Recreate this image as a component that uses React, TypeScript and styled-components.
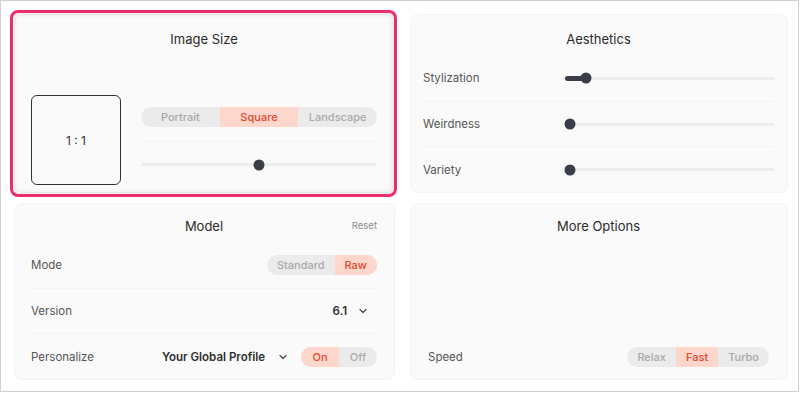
import React from 'react'
import styled, { createGlobalStyle } from 'styled-components'
import { ChevronDown } from 'lucide-react'

const GlobalStyle = createGlobalStyle`
  html, body {
    margin: 0;
    padding: 0;
    background: #ffffff;
  }
  body {
    font-family: Inter, "Noto Sans", "Liberation Sans", sans-serif;
    color: #333;
  }
`

const Frame = styled.div`
  box-sizing: border-box;
  width: 799px;
  height: 392px;
  border: 1px solid #d2d2d2;
  background: #ffffff;
  padding: 13px 10px 11px 13px;
  display: grid;
  grid-template-columns: 381px 378px;
  grid-template-rows: 179px 177px;
  column-gap: 15px;
  row-gap: 10px;
`

const Card = styled.section<{ $highlight?: boolean; $top?: number; $side?: number }>`
  position: relative;
  box-sizing: border-box;
  background: #fafafa;
  border: 1px solid #f4f4f4;
  border-radius: 8px;
  padding: ${({ $top = 15 }) => $top}px ${({ $side = 16 }) => $side + 1}px 0 ${({ $side = 16 }) => $side}px;
  display: flex;
  flex-direction: column;

  ${({ $highlight }) =>
    $highlight &&
    `
    &::after {
      content: '';
      position: absolute;
      inset: -5px -3px -5px -5px;
      border: 3px solid #ec2e6c;
      border-radius: 8px;
      box-shadow: inset 0 0 6px rgba(0, 0, 0, 0.14);
      pointer-events: none;
    }
  `}
`

const TitleBar = styled.div`
  position: relative;
  height: 16px;
  margin-bottom: 8px;
  display: flex;
  align-items: center;
  justify-content: center;
`

const Title = styled.h2`
  margin: 0;
  font-size: 13px;
  font-weight: 400;
  color: #2a2a2a;
  line-height: 16px;
`

const ResetLink = styled.span`
  position: absolute;
  right: 0;
  top: 2px;
  font-size: 9.5px;
  color: #8a8a8a;
`

const SizeBody = styled.div`
  margin-top: auto;
  margin-bottom: 7px;
  display: flex;
  align-items: flex-start;
  gap: 20px;
`

const RatioBox = styled.div`
  box-sizing: border-box;
  width: 90px;
  height: 90px;
  border: 1.5px solid #2f3035;
  border-radius: 6px;
  display: flex;
  align-items: center;
  justify-content: center;
  font-size: 12px;
  color: #333;
  flex-shrink: 0;
`

const SizeControls = styled.div`
  flex: 1;
  padding-top: 12px;
  display: flex;
  flex-direction: column;
`

const Divider = styled.div`
  height: 1px;
  background: #f3f3f3;
  margin: 14px 0 0;
`

const Segmented = styled.div<{ $fill?: boolean }>`
  display: flex;
  height: 20px;
  border-radius: 10px;
  overflow: hidden;
  background: #ebebeb;
  width: ${({ $fill }) => ($fill ? '100%' : 'auto')};
  flex-shrink: 0;
`

const Segment = styled.div<{ $active?: boolean; $fill?: boolean }>`
  flex: ${({ $fill }) => ($fill ? 1 : 'none')};
  min-width: 18px;
  padding: 0 ${({ $fill }) => ($fill ? 0 : 10)}px;
  display: flex;
  align-items: center;
  justify-content: center;
  font-size: 11px;
  font-weight: 500;
  color: ${({ $active }) => ($active ? '#e4482c' : '#a9a9a9')};
  background: ${({ $active }) => ($active ? '#fdd6cc' : 'transparent')};
`

const Track = styled.div<{ $mt?: number; $grow?: boolean }>`
  position: relative;
  height: 3px;
  border-radius: 2px;
  background: #ededed;
  margin-top: ${({ $mt = 0 }) => $mt}px;
  flex: ${({ $grow }) => ($grow ? 1 : 'none')};
`

const Fill = styled.div`
  position: absolute;
  left: 0;
  top: -1px;
  height: 5px;
  border-radius: 3px;
  background: #3a3d47;
`

const Thumb = styled.div`
  position: absolute;
  top: 50%;
  width: 11px;
  height: 11px;
  border-radius: 50%;
  background: #3a3d47;
  transform: translate(-50%, -50%);
`

const Row = styled.div<{ $divider?: boolean }>`
  height: 46px;
  display: flex;
  align-items: center;
  border-top: 1px solid ${({ $divider }) => ($divider ? '#f3f3f3' : 'transparent')};
  box-sizing: border-box;
`

const Label = styled.span<{ $width?: number }>`
  font-size: 11.5px;
  color: #555;
  width: ${({ $width }) => ($width ? `${$width}px` : 'auto')};
  flex-shrink: 0;
`

const RightGroup = styled.div`
  margin-left: auto;
  display: flex;
  align-items: center;
`

const Value = styled.span`
  font-size: 11.5px;
  font-weight: 600;
  color: #2f2f2f;
`

const Chevron = styled.span<{ $gap: number; $after?: number }>`
  display: inline-flex;
  color: #444;
  margin-left: ${({ $gap }) => $gap}px;
  margin-right: ${({ $after = 0 }) => $after}px;
`

const Spacer = styled.div`
  flex: 1;
`

const Slider = ({ value, filled }: { value: number; filled?: boolean }) => (
  <Track $grow>
    {filled && <Fill style={{ width: `${value}%` }} />}
    <Thumb style={{ left: `${value}%` }} />
  </Track>
)

const Toggle = ({ options, active, fill }: { options: string[]; active: string; fill?: boolean }) => (
  <Segmented $fill={fill}>
    {options.map((o) => (
      <Segment key={o} $active={o === active} $fill={fill}>
        {o}
      </Segment>
    ))}
  </Segmented>
)

export default function App() {
  return (
    <>
      <GlobalStyle />
      <Frame>
        <Card $highlight $top={16}>
          <TitleBar>
            <Title>Image Size</Title>
          </TitleBar>
          <SizeBody>
            <RatioBox>1 : 1</RatioBox>
            <SizeControls>
              <Toggle options={['Portrait', 'Square', 'Landscape']} active="Square" fill />
              <Divider />
              <Track $mt={21}>
                <Thumb style={{ left: '50%' }} />
              </Track>
            </SizeControls>
          </SizeBody>
        </Card>

        <Card $top={16} $side={12}>
          <TitleBar>
            <Title>Aesthetics</Title>
          </TitleBar>
          <Row>
            <Label $width={142}>Stylization</Label>
            <Slider value={10} filled />
          </Row>
          <Row $divider>
            <Label $width={142}>Weirdness</Label>
            <Slider value={2.5} />
          </Row>
          <Row $divider>
            <Label $width={142}>Variety</Label>
            <Slider value={2.5} />
          </Row>
        </Card>

        <Card $top={14}>
          <TitleBar>
            <Title>Model</Title>
            <ResetLink>Reset</ResetLink>
          </TitleBar>
          <Row>
            <Label>Mode</Label>
            <RightGroup>
              <Toggle options={['Standard', 'Raw']} active="Raw" />
            </RightGroup>
          </Row>
          <Row $divider>
            <Label>Version</Label>
            <RightGroup>
              <Value>6.1</Value>
              <Chevron $gap={10} $after={8}>
                <ChevronDown size={12} strokeWidth={2.4} />
              </Chevron>
            </RightGroup>
          </Row>
          <Row $divider>
            <Label>Personalize</Label>
            <RightGroup>
              <Value>Your Global Profile</Value>
              <Chevron $gap={12} $after={12}>
                <ChevronDown size={12} strokeWidth={2.4} />
              </Chevron>
              <Toggle options={['On', 'Off']} active="On" />
            </RightGroup>
          </Row>
        </Card>

        <Card $top={14} $side={17}>
          <TitleBar>
            <Title>More Options</Title>
          </TitleBar>
          <Spacer />
          <Row>
            <Label>Speed</Label>
            <RightGroup>
              <Toggle options={['Relax', 'Fast', 'Turbo']} active="Fast" />
            </RightGroup>
          </Row>
        </Card>
      </Frame>
    </>
  )
}
